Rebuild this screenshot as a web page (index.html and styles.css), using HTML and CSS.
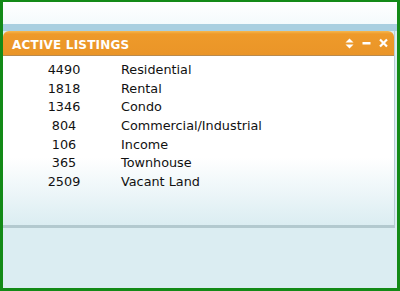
FILE: index.html
```html
<!DOCTYPE html>
<html lang="en">
<head>
  <meta charset="UTF-8">
  <title>Active Listings</title>
  <link rel="stylesheet" href="styles.css">
</head>
<body>
  <div class="frame">
    <div class="top-space"></div>
    <div class="strip"></div>

    <!-- PANEL: orange header and listing table -->
    <div class="panel">
      <div class="panel-head">
        <span class="title">ACTIVE LISTINGS</span>
        <span class="tools">
          <svg width="9" height="11" viewBox="0 0 9 11"><path d="M4.5 0.5 L8.5 4.5 L0.5 4.5 Z M4.5 10.5 L8.5 6.5 L0.5 6.5 Z" fill="#fff"/></svg>
          <svg width="9" height="11" viewBox="0 0 9 11"><rect x="0.5" y="4" width="8" height="2.5" fill="#fff"/></svg>
          <svg width="9" height="11" viewBox="0 0 9 11"><path d="M1 1.5 L8 8.5 M8 1.5 L1 8.5" stroke="#fff" stroke-width="2.2"/></svg>
        </span>
      </div>
      <div class="panel-body">
        <div class="row"><span class="num">4490</span><span class="kind">Residential</span></div>
        <div class="row"><span class="num">1818</span><span class="kind">Rental</span></div>
        <div class="row"><span class="num">1346</span><span class="kind">Condo</span></div>
        <div class="row"><span class="num">804</span><span class="kind">Commercial/Industrial</span></div>
        <div class="row"><span class="num">106</span><span class="kind">Income</span></div>
        <div class="row"><span class="num">365</span><span class="kind">Townhouse</span></div>
        <div class="row"><span class="num">2509</span><span class="kind">Vacant Land</span></div>
      </div>
    </div>
  </div>
</body>
</html>
```

FILE: styles.css
```css
/* BODY: the screenshot window */
body {
  margin: 0;
  padding: 0;
  width: 400px;
  height: 291px;
  overflow: hidden;
  font-family: "DejaVu Sans", Verdana, sans-serif;
}

/* FRAME: green border round everything */
.frame {
  box-sizing: border-box;
  width: 400px;
  height: 291px;
  border: 3px solid #138a17;
  border-top-width: 2px;
  border-left-width: 3px;
  background: #dbedf2;
  display: flex;
  flex-direction: column;
}

.top-space {
  height: 22px;
  background: linear-gradient(#ffffff, #f4fafc);
}

.strip {
  height: 7px;
  background: #a9cfe0;
}

/* PANEL */
.panel {
  margin-right: 2px;
  border-right: 1px solid #b6cdd4;
  border-bottom: 3px solid #b3c9cf;
}

.panel-head {
  height: 24px;
  background: linear-gradient(#f6b84e 0, #ee9a2a 3px, #ea9528 100%);
  border-radius: 6px 6px 0 0;
  border-bottom: 1px solid #b98a4e;
  display: flex;
  align-items: center;
  justify-content: space-between;
  padding: 0 6px 0 9px;
}

.title {
  color: #fff;
  font-weight: bold;
  font-size: 12px;
  letter-spacing: 0.2px;
  padding-top: 3px;
}

.tools {
  display: flex;
  gap: 8px;
  padding-top: 1px;
}

.panel-body {
  height: 169px;
  padding-top: 4px;
  box-sizing: border-box;
  background: linear-gradient(#ffffff 0, #ffffff 60%, #dbedf2 100%);
  font-size: 12.8px;
  color: #111;
}

.row {
  display: flex;
  height: 18.7px;
  align-items: center;
}

.num {
  width: 118px;
  padding-left: 4px;
  box-sizing: border-box;
  text-align: center;
}
```
